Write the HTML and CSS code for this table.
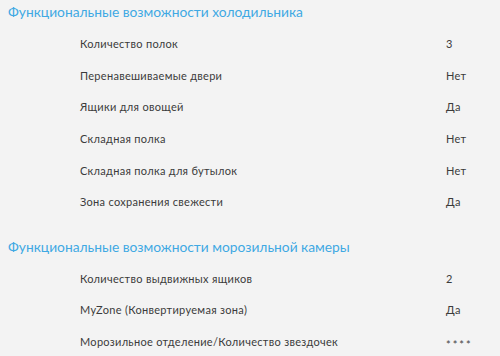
FILE: index.html
```html
<!DOCTYPE html>
<html lang="ru">
<head>
<meta charset="utf-8">
<title>Характеристики</title>
<link rel="stylesheet" href="styles.css">
</head>
<body>
<section class="spec">
  <h2 class="spec-title">Функциональные возможности холодильника</h2>
  <div class="spec-row"><span class="spec-name">Количество полок</span><span class="spec-value">3</span></div>
  <div class="spec-row"><span class="spec-name">Перенавешиваемые двери</span><span class="spec-value">Нет</span></div>
  <div class="spec-row"><span class="spec-name">Ящики для овощей</span><span class="spec-value">Да</span></div>
  <div class="spec-row"><span class="spec-name">Складная полка</span><span class="spec-value">Нет</span></div>
  <div class="spec-row"><span class="spec-name">Складная полка для бутылок</span><span class="spec-value">Нет</span></div>
  <div class="spec-row"><span class="spec-name">Зона сохранения свежести</span><span class="spec-value">Да</span></div>
</section>
<section class="spec">
  <h2 class="spec-title">Функциональные возможности морозильной камеры</h2>
  <div class="spec-row"><span class="spec-name">Количество выдвижных ящиков</span><span class="spec-value">2</span></div>
  <div class="spec-row"><span class="spec-name">MyZone (Конвертируемая зона)</span><span class="spec-value">Да</span></div>
  <div class="spec-row"><span class="spec-name">Морозильное отделение/Количество звездочек</span><span class="spec-value stars">****</span></div>
</section>
</body>
</html>
```
FILE: styles.css
```css
html, body {
  margin: 0;
  padding: 0;
  background: #f3f3f3;
}

body {
  font-family: "Lato", "DejaVu Sans", sans-serif;
  color: #3b3b3b;
}

.spec {
  display: flex;
  flex-direction: column;
}

.spec + .spec {
  margin-top: 17px;
}

.spec-title {
  margin: 0 0 4px;
  padding-left: 8px;
  height: 24px;
  line-height: 24px;
  font-size: 13.8px;
  font-weight: 400;
  color: #3fa9e3;
}

.spec-row {
  display: grid;
  grid-template-columns: 366px 1fr;
  align-items: center;
  height: 31.6px;
  padding-left: 80px;
  font-size: 11px;
  letter-spacing: 0.3px;
}

/* asterisks sit high in the font; nudge them to the text's middle */
.stars {
  padding-top: 5px;
  font-size: 11px;
  letter-spacing: 2px;
  color: #444;
}
```
